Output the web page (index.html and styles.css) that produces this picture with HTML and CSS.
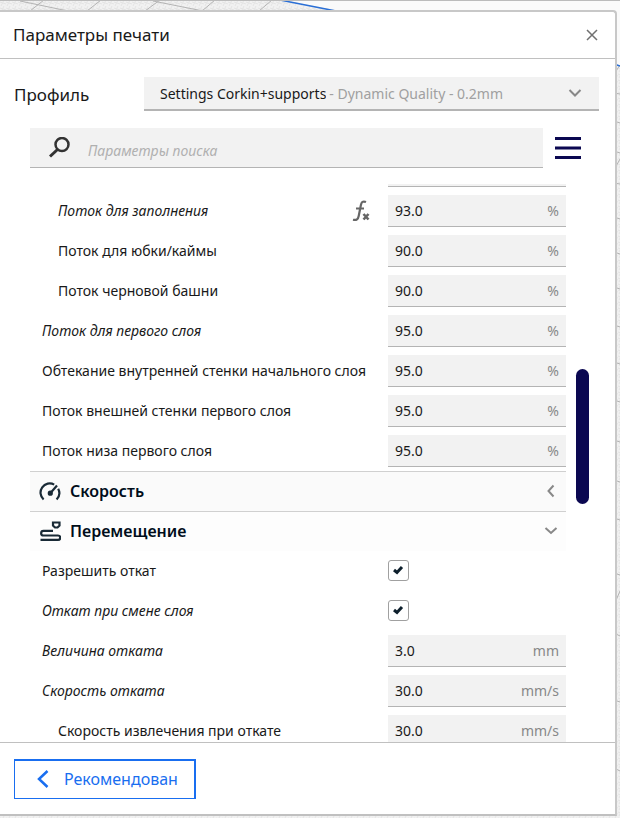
FILE: index.html
```html
<!DOCTYPE html>
<html lang="ru">
<head>
  <meta charset="UTF-8" />
  <meta name="viewport" content="width=device-width, initial-scale=1.0" />
  <title>Параметры печати</title>
  <link rel="stylesheet" href="styles.css">
</head>
<body>
  <!-- Build plate grid behind the panel -->
  <svg class="scene" aria-hidden="true">
    <defs>
      <pattern id="mesh" width="6" height="6" patternUnits="userSpaceOnUse">
        <path d="M0 2l6 2M1 6l3-6" stroke="#e4e4e4" fill="none"/>
      </pattern>
    </defs>
    <rect width="100%" height="100%" fill="#f1f1f1"/>
    <rect width="100%" height="100%" fill="url(#mesh)"/>
    <path d="M283 0H620V65L340 11z" fill="#fafafa"/>
    <path d="M610 0H620V65H610z" fill="#fafafa"/>
    <g stroke="#b4b4b4" fill="none">
      <path d="M20 1l48 10M44 0L30 11M101 0L87 11M153 1l50 10M160 0L145 11M215 0L202 11M272 0L259 11"/>
      <path d="M614 74l6-9M614 93l6 1M614 121l6 2M614 151l6 2M614 170l6-11M614 183l6 1M614 217l6 2M614 252l6 2M614 287l6 2M614 325l6 2M614 362l6 2M614 400l6 2M614 440l6 2M614 480l6 2M614 518l6 2M614 573l6 2M614 605l6-14M614 633l6 3M614 700l6 2M614 768l6 3"/>
    </g>
    <path d="M280 0l56 11M614 64l6 2" stroke="#2a6fd6" stroke-width="1.5"/>
    <path d="M0 0H620" stroke="#bbb" stroke-width="2"/>
  </svg>

  <main class="panel">
    <header class="panel-header">
      <h1>Параметры печати</h1>
      <button class="close" aria-label="Закрыть">
        <svg width="12" height="12" viewBox="0 0 12 12"><path d="M1 1l10 10M11 1L1 11"/></svg>
      </button>
    </header>

    <div class="profile">
      <label for="profile">Профиль</label>
      <div class="profile-box">
        <select id="profile" aria-describedby="quality">
          <option>Settings Corkin+supports</option>
        </select>
        <span id="quality" class="quality">- Dynamic Quality - 0.2mm</span>
        <svg class="chevron" width="14" height="14" viewBox="0 0 14 14"><path d="M1.500 4l5.500 5.500L12.500 4"/></svg>
      </div>
    </div>

    <div class="search">
      <div class="search-box">
        <svg width="22" height="22" viewBox="0 0 22 22"><circle cx="14" cy="7.500" r="6.500"/><path d="M9.500 12.500L2 19.500" stroke-width="3"/></svg>
        <input type="search" placeholder="Параметры поиска" aria-label="Параметры поиска">
      </div>
      <button class="menu" aria-label="Меню">
        <svg width="26" height="24" viewBox="0 0 26 24"><path d="M0 2.500h26M0 12h26M0 21.500h26"/></svg>
      </button>
    </div>

    <div class="settings">
      <div class="list">
        <div class="row">
          <div class="field"></div>
        </div>
        <div class="row sub changed">
          <label for="infill">Поток для заполнения</label>
          <svg class="fx" width="18" height="22" viewBox="0 0 18 22"><path d="M14 2C10.800.7 9.500 2.200 8.900 5L6.700 16c-.6 3-2 4.600-5.700 3.700M4 8.500h8"/><path d="M11.500 14l5 5.500M16.500 14l-5 5.500" stroke-width="2.600"/></svg>
          <div class="field"><input id="infill" type="text" value="93.0"><span>%</span></div>
        </div>
        <div class="row sub">
          <label for="skirt">Поток для юбки/каймы</label>
          <div class="field"><input id="skirt" type="text" value="90.0"><span>%</span></div>
        </div>
        <div class="row sub">
          <label for="tower">Поток черновой башни</label>
          <div class="field"><input id="tower" type="text" value="90.0"><span>%</span></div>
        </div>
        <div class="row changed">
          <label for="first">Поток для первого слоя</label>
          <div class="field"><input id="first" type="text" value="95.0"><span>%</span></div>
        </div>
        <div class="row">
          <label for="inner">Обтекание внутренней стенки начального слоя</label>
          <div class="field"><input id="inner" type="text" value="95.0"><span>%</span></div>
        </div>
        <div class="row">
          <label for="outer">Поток внешней стенки первого слоя</label>
          <div class="field"><input id="outer" type="text" value="95.0"><span>%</span></div>
        </div>
        <div class="row">
          <label for="bottom">Поток низа первого слоя</label>
          <div class="field"><input id="bottom" type="text" value="95.0"><span>%</span></div>
        </div>

        <button class="section" aria-expanded="false">
          <svg class="icon" width="22" height="22" viewBox="0 0 22 22"><path d="M4.600 19.500A9.200 9.200 0 0 1 15.200 4.600M19.200 8.800A9.200 9.200 0 0 1 17.600 19.500"/><path d="M11.500 13L18 5.500"/><circle cx="11.300" cy="13.200" r="1.500" fill="#192a36"/></svg>
          <span>Скорость</span>
          <svg class="chevron" width="14" height="14" viewBox="0 0 14 14"><path d="M9.500 1.500L4.500 7l5 5.500"/></svg>
        </button>
        <button class="section open" aria-expanded="true">
          <svg class="icon" width="22" height="22" viewBox="0 0 22 22"><path d="M14 2.500h6.500v3L18.500 7.500H16l-2-2zM14 10.800H4.500a2.300 2.300 0 0 0 0 4.700h14.500a2.200 2.200 0 0 1 0 4.400H1.500"/></svg>
          <span>Перемещение</span>
          <svg class="chevron" width="14" height="14" viewBox="0 0 14 14"><path d="M1.500 4L7 9l5.500-5"/></svg>
        </button>

        <div class="row">
          <label for="retract">Разрешить откат</label>
          <div class="check"><input id="retract" type="checkbox" checked><svg width="12" height="10" viewBox="0 0 12 10"><path d="M2 5l3 2.500L10 2"/></svg></div>
        </div>
        <div class="row changed">
          <label for="layer">Откат при смене слоя</label>
          <div class="check"><input id="layer" type="checkbox" checked><svg width="12" height="10" viewBox="0 0 12 10"><path d="M2 5l3 2.500L10 2"/></svg></div>
        </div>
        <div class="row changed">
          <label for="distance">Величина отката</label>
          <div class="field"><input id="distance" type="text" value="3.0"><span>mm</span></div>
        </div>
        <div class="row changed">
          <label for="speed">Скорость отката</label>
          <div class="field"><input id="speed" type="text" value="30.0"><span>mm/s</span></div>
        </div>
        <div class="row sub">
          <label for="pull">Скорость извлечения при откате</label>
          <div class="field"><input id="pull" type="text" value="30.0"><span>mm/s</span></div>
        </div>
      </div>
      <div class="scrollbar"><div class="thumb"></div></div>
    </div>

    <footer class="panel-footer">
      <button class="recommended">
        <svg width="12" height="20" viewBox="0 0 12 20"><path d="M10.500 2L2 10l8.500 8"/></svg>
        Рекомендован
      </button>
    </footer>
  </main>
</body>
</html>
```
FILE: styles.css
```css
* { box-sizing: border-box; margin: 0; padding: 0; }

body {
  font-family: "Noto Sans", sans-serif;
  font-size: 14px;
  color: #191919;
  height: 100vh;
  padding: 10px 3px 2px 0;
  background: #f1f1f1;
  overflow: hidden;
}

button, input, select {
  font: inherit;
  color: inherit;
  border: none;
  background: none;
}

button { cursor: pointer; }
svg { flex: none; fill: none; }

.scene {
  position: absolute;
  top: 0;
  left: 0;
  width: 100%;
  height: 100%;
  z-index: -1;
}

.panel {
  display: flex;
  flex-direction: column;
  height: 100%;
  border: 2px solid #c8c8c8;
  border-left: none;
  border-bottom-color: #c0c0c0;
  border-top-right-radius: 4px;
  background: white;
}

.panel-header {
  display: flex;
  align-items: center;
  justify-content: space-between;
  height: 47px;
  padding: 0 17px 1px 13px;
  border-bottom: 1px solid #c0c0c0;
}

.panel-header h1 {
  font-size: 17px;
  line-height: 22px;
  font-weight: 400;
}

.close {
  display: flex;
}

.close svg {
  stroke: #707070;
  stroke-width: 1.5;
}

.profile {
  display: flex;
  align-items: center;
  padding: 18px 16px 0 14px;
}

.profile label {
  width: 130px;
  font-size: 17px;
}

.profile-box {
  flex: 1;
  display: flex;
  align-items: center;
  height: 34px;
  padding: 0 17px 0 16px;
  background: #f2f2f2;
  border-bottom: 2px solid #b4b4b4;
}

.profile-box select {
  appearance: none;
  field-sizing: content;
}

.quality {
  margin-left: 3px;
  color: #a0a0a0;
}

.chevron {
  margin-left: auto;
  stroke: #888;
  stroke-width: 2;
}

.search {
  display: flex;
  align-items: center;
  gap: 12px;
  padding: 17px 34px 0 30px;
}

.search-box {
  flex: 1;
  display: flex;
  align-items: center;
  gap: 18px;
  height: 40px;
  padding-left: 18px;
  background: #f2f2f2;
  border-bottom: 1px solid #b4b4b4;
}

.search-box svg {
  stroke: #333;
  stroke-width: 2.5;
}

.search-box input {
  flex: 1;
  padding-top: 5px;
}

.search-box input::placeholder {
  color: #b0b0b0;
  font-style: italic;
}

.menu {
  display: flex;
}

.menu svg {
  stroke: #0b0851;
  stroke-width: 3;
}

.settings {
  flex: 1;
  min-height: 0;
  display: flex;
  gap: 10px;
  margin-top: 16px;
  padding: 0 26px 0 30px;
  overflow: hidden;
}

/* list is scrolled part way into its first row */
.list {
  flex: 1;
  margin-top: -33px;
}

.row {
  display: flex;
  align-items: center;
  height: 40px;
  padding-left: 12px;
}

.row label {
  flex: 1;
  padding-bottom: 2px;
  white-space: nowrap;
}

.sub { padding-left: 28px; }
.changed label { font-style: italic; }

.fx {
  margin-right: 18px;
  stroke: #666;
  stroke-width: 2.2;
}

.field {
  display: flex;
  align-items: center;
  width: 178px;
  height: 32px;
  margin-left: auto;
  padding: 0 7px;
  background: #f2f2f2;
  border-bottom: 1px solid #b4b4b4;
}

.field input {
  flex: 1;
  min-width: 0;
}

.field span { color: #888; }

.check {
  display: grid;
  width: 178px;
  padding-bottom: 2px;
}

.check input,
.check svg {
  grid-area: 1 / 1;
}

.check input {
  appearance: none;
  width: 21px;
  height: 21px;
  border: 1px solid #a0a0a0;
  border-radius: 3px;
}

.check svg {
  align-self: center;
  margin-left: 4px;
  stroke: #0d1f2c;
  stroke-width: 3;
  opacity: 0;
  pointer-events: none;
}

.check input:checked + svg { opacity: 1; }

.section {
  display: flex;
  align-items: center;
  gap: 9px;
  width: 100%;
  height: 40px;
  padding: 0 8px 2px 9px;
  border-top: 1px solid #d0d0d0;
  background: #fafafa;
  font-size: 16px;
  font-weight: 600;
  color: #000d1a;
}

.open { background: #fdfdfd; }

.icon {
  stroke: #192a36;
  stroke-width: 2.2;
}

.scrollbar {
  width: 13px;
  padding-top: 185px;
}

.thumb {
  height: 135px;
  border-radius: 7px;
  background: #0b0851;
}

.panel-footer {
  padding: 16px 14px 15px;
  border-top: 1px solid #c0c0c0;
}

.recommended {
  display: flex;
  align-items: center;
  gap: 15px;
  height: 40px;
  padding: 0 16px 1px 22px;
  border: solid #196ef0;
  border-width: 2px 2px 1px 1px;
  font-size: 16px;
  color: #196ef0;
}

.recommended svg {
  stroke: #196ef0;
  stroke-width: 2.5;
}
```
